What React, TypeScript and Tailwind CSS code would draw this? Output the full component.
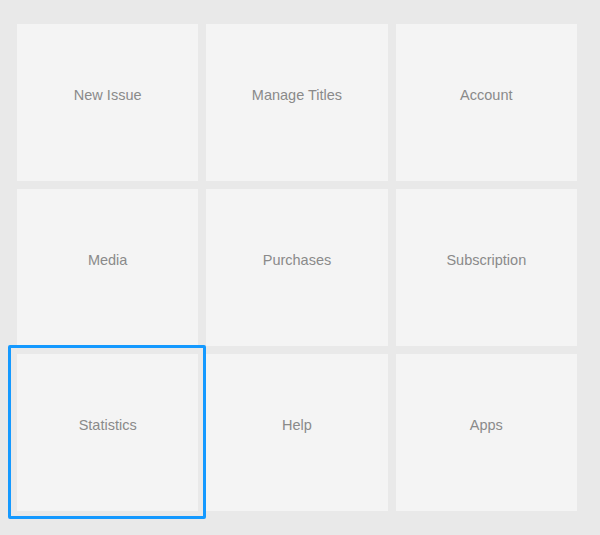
import React from "react";

const items = [
  "New Issue",
  "Manage Titles",
  "Account",
  "Media",
  "Purchases",
  "Subscription",
  "Statistics",
  "Help",
  "Apps",
];

export default function App() {
  return (
    <div className="w-[600px] h-[535px] bg-[#e9e9e9] pt-[24px] pl-[17px]" style={{ fontFamily: '"Liberation Sans", Arial, sans-serif' }}>
      <div className="grid grid-cols-3 gap-x-[8px] gap-y-[8px] w-[560px]">
        {items.map((label) => (
          <div key={label} className="relative h-[157px] bg-[#f4f4f4] flex items-center justify-center pb-[14px]">
            <span className="text-[14.5px] text-[#8a8a8a]">{label}</span>
            {label === "Statistics" && (
              <div className="absolute left-[-9px] top-[-9px] w-[calc(100%+17px)] h-[calc(100%+17px)] border-[3px] border-[#1499ff] rounded-[2px]" />
            )}
          </div>
        ))}
      </div>
    </div>
  );
}
